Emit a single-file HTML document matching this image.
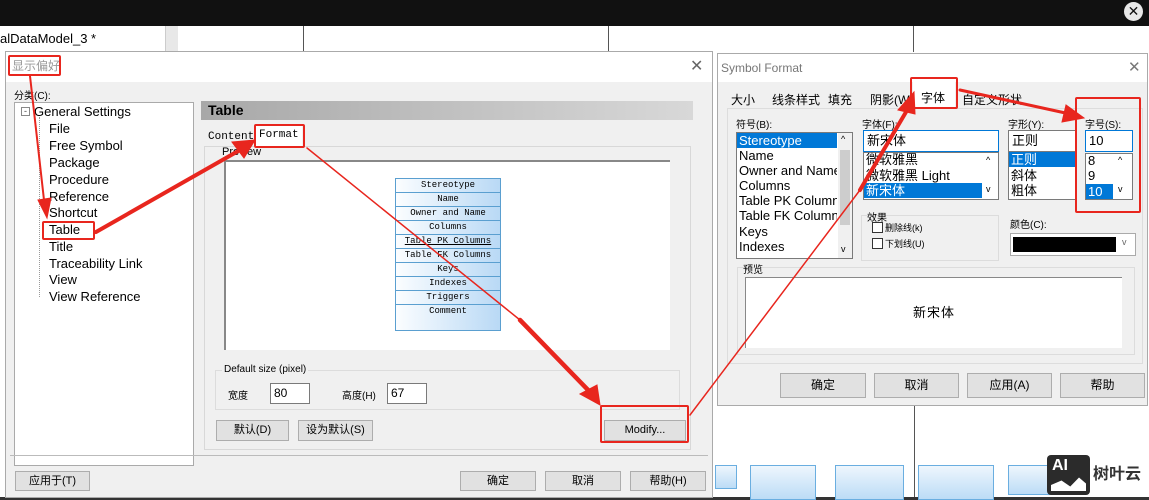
<!DOCTYPE html>
<html><head><meta charset="utf-8"><style>
*{margin:0;padding:0;box-sizing:border-box}
body{width:1149px;height:500px;overflow:hidden;background:#fff;position:relative;font-family:"Liberation Sans","Noto Sans CJK SC",sans-serif;font-size:12px;color:#000}
.a{position:absolute}
.t{position:absolute;white-space:nowrap}
.btn{position:absolute;background:#e1e1e1;border:1px solid #adadad;text-align:center;font-size:11px;line-height:19px}
.box{position:absolute;background:#fff;border:1px solid #7a7a7a}
.grp{position:absolute;border:1px solid #dcdcdc}
.red{position:absolute;border:2px solid #e8261e;border-radius:2px}
.tr{position:absolute;left:49px;font-size:13px;white-space:nowrap}
.mono{font-family:"Liberation Mono","Noto Sans CJK SC",monospace}
.row{height:14px;border-bottom:1px solid #5a9fd0;font-size:9px;text-align:center;line-height:13px;white-space:nowrap}
.li{position:absolute;font-size:13px;line-height:15px;white-space:nowrap;overflow:hidden}
.sel{background:#0078d7;color:#fff}
.mt{position:absolute;border:1px solid #6aaee0;background:linear-gradient(#eef6fd,#bcdcf6)}
</style></head><body>
<div class="a" style="left:0;top:0;width:1149px;height:26px;background:#111"></div>
<div class="a" style="left:1124px;top:2px;width:19px;height:19px;border-radius:50%;background:#e8e8e8;color:#111;font-size:14px;text-align:center;line-height:19px">✕</div>
<div class="t" style="left:0;top:31px;font-size:13px">alDataModel_3 *</div>
<div class="a" style="left:165px;top:26px;width:13px;height:26px;background:#e8e8e8;border-left:1px solid #ccc"></div>
<div class="a" style="left:303px;top:26px;width:1px;height:26px;background:#555"></div>
<div class="a" style="left:608px;top:26px;width:1px;height:26px;background:#555"></div>
<div class="a" style="left:913px;top:26px;width:1px;height:26px;background:#555"></div>
<div class="a" style="left:914px;top:405px;width:1px;height:95px;background:#555"></div>
<div class="a" style="left:0;top:497px;width:1149px;height:3px;background:#333"></div>

<!-- left dialog -->
<div class="a" style="left:5px;top:51px;width:708px;height:447px;background:#f0f0f0;border:1px solid #aaa"></div>
<div class="a" style="left:6px;top:52px;width:706px;height:30px;background:#fff"></div>
<div class="t" style="left:12px;top:57px;font-size:12px;color:#999">显示偏好</div>
<div class="red" style="left:8px;top:55px;width:53px;height:21px"></div>
<div class="t" style="left:690px;top:56px;font-size:16px;color:#666">✕</div>
<div class="t" style="left:14px;top:87px;font-size:10px">分类(C):</div>
<div class="box" style="left:14px;top:102px;width:180px;height:364px;border-color:#aaa"></div>
<div class="a" style="left:21px;top:107px;width:9px;height:9px;border:1px solid #888;font-size:9px;line-height:6px;text-align:center;color:#444">-</div>
<div class="t" style="left:34px;top:104px;font-size:13px">General Settings</div>
<div class="a" style="left:39px;top:117px;width:1px;height:180px;border-left:1px dotted #999"></div>
<div class="tr" style="top:121px">File</div>
<div class="tr" style="top:138px">Free Symbol</div>
<div class="tr" style="top:155px">Package</div>
<div class="tr" style="top:172px">Procedure</div>
<div class="tr" style="top:189px">Reference</div>
<div class="tr" style="top:205px">Shortcut</div>
<div class="tr" style="top:222px">Table</div>
<div class="red" style="left:42px;top:221px;width:53px;height:19px"></div>
<div class="tr" style="top:239px">Title</div>
<div class="tr" style="top:256px">Traceability Link</div>
<div class="tr" style="top:272px">View</div>
<div class="tr" style="top:289px">View Reference</div>

<div class="a" style="left:201px;top:101px;width:492px;height:19px;background:linear-gradient(90deg,#a8a8a8,#d8d8d8)"></div>
<div class="t" style="left:208px;top:102px;font-size:14px;font-weight:bold">Table</div>
<div class="a" style="left:204px;top:146px;width:487px;height:304px;border:1px solid #d8d8d8;background:#f0f0f0"></div>
<div class="t mono" style="left:208px;top:131px;font-size:11px">Content</div>
<div class="a" style="left:254px;top:126px;width:48px;height:21px;background:#fff"></div>
<div class="t mono" style="left:259px;top:129px;font-size:11px">Format</div>
<div class="red" style="left:254px;top:124px;width:51px;height:24px"></div>
<div class="t" style="left:222px;top:146px;font-size:11px">Preview</div>
<div class="a" style="left:224px;top:160px;width:446px;height:190px;background:#fff;border-left:2px solid #888;border-top:2px solid #888"></div>
<div class="a mono" style="left:395px;top:178px;width:106px;height:153px;border:1px solid #5a9fd0;background:linear-gradient(90deg,#fbfdff,#b9d9f5)">
<div class="row">Stereotype</div><div class="row">Name</div><div class="row">Owner and Name</div><div class="row">Columns</div><div class="row" style="text-decoration:underline">Table PK Columns</div><div class="row">Table FK Columns</div><div class="row">Keys</div><div class="row">Indexes</div><div class="row">Triggers</div><div class="row" style="border:none">Comment</div></div>
<div class="grp" style="left:215px;top:370px;width:465px;height:40px"></div>
<div class="t" style="left:222px;top:364px;font-size:10px;background:#f0f0f0;padding:0 2px">Default size (pixel)</div>
<div class="t" style="left:228px;top:387px;font-size:10px">宽度</div>
<div class="box" style="left:270px;top:383px;width:40px;height:21px;padding-left:3px;font-size:12px;line-height:19px">80</div>
<div class="t" style="left:342px;top:387px;font-size:10px">高度(H)</div>
<div class="box" style="left:387px;top:383px;width:40px;height:21px;padding-left:3px;font-size:12px;line-height:19px">67</div>
<div class="btn" style="left:216px;top:420px;width:73px;height:21px">默认(D)</div>
<div class="btn" style="left:298px;top:420px;width:75px;height:21px">设为默认(S)</div>
<div class="btn" style="left:604px;top:420px;width:82px;height:21px">Modify...</div>
<div class="red" style="left:600px;top:405px;width:89px;height:38px"></div>
<div class="a" style="left:10px;top:455px;width:698px;height:1px;background:#bbb"></div>
<div class="btn" style="left:15px;top:471px;width:75px;height:20px">应用于(T)</div>
<div class="btn" style="left:460px;top:471px;width:76px;height:20px">确定</div>
<div class="btn" style="left:545px;top:471px;width:76px;height:20px">取消</div>
<div class="btn" style="left:630px;top:471px;width:76px;height:20px">帮助(H)</div>

<!-- right dialog -->
<div class="a" style="left:717px;top:53px;width:431px;height:353px;background:#f0f0f0;border:1px solid #aaa"></div>
<div class="a" style="left:718px;top:54px;width:429px;height:28px;background:#fff"></div>
<div class="t" style="left:721px;top:61px;font-size:12px;color:#777">Symbol Format</div>
<div class="t" style="left:1128px;top:58px;font-size:15px;color:#777">✕</div>
<div class="a" style="left:727px;top:108px;width:416px;height:256px;background:#f0f0f0;border:1px solid #ddd"></div>
<div class="t" style="left:731px;top:91px;font-size:12px">大小</div>
<div class="t" style="left:772px;top:91px;font-size:12px">线条样式</div>
<div class="t" style="left:828px;top:91px;font-size:12px">填充</div>
<div class="t" style="left:870px;top:91px;font-size:12px">阴影(W)</div>
<div class="a" style="left:913px;top:80px;width:42px;height:29px;background:#fff"></div>
<div class="t" style="left:921px;top:89px;font-size:12px">字体</div>
<div class="red" style="left:910px;top:77px;width:48px;height:32px"></div>
<div class="t" style="left:962px;top:91px;font-size:12px">自定义形状</div>
<div class="t" style="left:736px;top:116px;font-size:10px">符号(B):</div>
<div class="box" style="left:736px;top:132px;width:117px;height:127px"></div>
<div class="a" style="left:838px;top:133px;width:14px;height:125px;background:#f0f0f0"></div>
<div class="a" style="left:840px;top:150px;width:10px;height:75px;background:#cdcdcd"></div>
<div class="t" style="left:841px;top:134px;font-size:9px">^</div><div class="t" style="left:841px;top:244px;font-size:9px">v</div>
<div class="li sel" style="left:737px;top:133px;width:100px;padding-left:2px">Stereotype</div>
<div class="li" style="left:739px;top:148px;width:98px">Name</div>
<div class="li" style="left:739px;top:163px;width:98px">Owner and Name</div>
<div class="li" style="left:739px;top:178px;width:98px">Columns</div>
<div class="li" style="left:739px;top:193px;width:98px">Table PK Columns</div>
<div class="li" style="left:739px;top:208px;width:98px">Table FK Columns</div>
<div class="li" style="left:739px;top:224px;width:98px">Keys</div>
<div class="li" style="left:739px;top:239px;width:98px">Indexes</div>
<div class="t" style="left:862px;top:116px;font-size:10px">字体(F):</div>
<div class="box" style="left:863px;top:130px;width:136px;height:22px;border-color:#0078d7;padding-left:3px;font-size:13px;line-height:20px">新宋体</div>
<div class="box" style="left:863px;top:152px;width:136px;height:48px"></div>
<div class="li" style="left:866px;top:152px">微软雅黑</div>
<div class="li" style="left:866px;top:168px">微软雅黑 Light</div>
<div class="li sel" style="left:864px;top:183px;width:118px;padding-left:2px">新宋体</div>
<div class="t" style="left:986px;top:155px;font-size:9px">^</div><div class="t" style="left:986px;top:184px;font-size:9px">v</div>
<div class="t" style="left:1008px;top:116px;font-size:10px">字形(Y):</div>
<div class="box" style="left:1008px;top:130px;width:68px;height:22px;padding-left:3px;font-size:13px;line-height:20px">正则</div>
<div class="box" style="left:1008px;top:152px;width:69px;height:48px"></div>
<div class="li sel" style="left:1009px;top:152px;width:66px;padding-left:2px">正则</div>
<div class="li" style="left:1011px;top:168px">斜体</div>
<div class="li" style="left:1011px;top:183px">粗体</div>
<div class="t" style="left:1085px;top:116px;font-size:10px">字号(S):</div>
<div class="box" style="left:1085px;top:130px;width:48px;height:22px;border-color:#0078d7;padding-left:3px;font-size:13px;line-height:20px">10</div>
<div class="box" style="left:1085px;top:153px;width:48px;height:47px"></div>
<div class="li" style="left:1088px;top:153px">8</div>
<div class="li" style="left:1088px;top:168px">9</div>
<div class="li sel" style="left:1086px;top:184px;width:27px;padding-left:2px">10</div>
<div class="t" style="left:1118px;top:155px;font-size:9px">^</div><div class="t" style="left:1118px;top:184px;font-size:9px">v</div>
<div class="red" style="left:1075px;top:97px;width:66px;height:116px"></div>
<div class="grp" style="left:861px;top:215px;width:138px;height:46px"></div>
<div class="t" style="left:867px;top:209px;font-size:10px">效果</div>
<div class="a" style="left:872px;top:222px;width:11px;height:11px;border:1px solid #333;background:#fff"></div>
<div class="t" style="left:885px;top:221px;font-size:9px">删除线(k)</div>
<div class="a" style="left:872px;top:238px;width:11px;height:11px;border:1px solid #333;background:#fff"></div>
<div class="t" style="left:885px;top:237px;font-size:9px">下划线(U)</div>
<div class="t" style="left:1010px;top:216px;font-size:10px">颜色(C):</div>
<div class="box" style="left:1010px;top:233px;width:126px;height:23px;border-color:#aaa"></div>
<div class="a" style="left:1013px;top:237px;width:103px;height:15px;background:#000"></div>
<div class="t" style="left:1122px;top:237px;font-size:9px;color:#666">v</div>
<div class="grp" style="left:737px;top:267px;width:398px;height:88px"></div>
<div class="t" style="left:743px;top:261px;font-size:10px">预览</div>
<div class="a" style="left:745px;top:277px;width:377px;height:71px;background:#fff;border-left:1px solid #888;border-top:1px solid #888"></div>
<div class="t" style="left:913px;top:302px;font-size:13px;letter-spacing:1px">新宋体</div>
<div class="btn" style="left:780px;top:373px;width:86px;height:25px;line-height:23px;font-size:12px">确定</div>
<div class="btn" style="left:874px;top:373px;width:85px;height:25px;line-height:23px;font-size:12px">取消</div>
<div class="btn" style="left:967px;top:373px;width:85px;height:25px;line-height:23px;font-size:12px">应用(A)</div>
<div class="btn" style="left:1060px;top:373px;width:85px;height:25px;line-height:23px;font-size:12px">帮助</div>

<!-- mini tables -->
<div class="mt" style="left:715px;top:465px;width:22px;height:24px"></div>
<div class="mt" style="left:750px;top:465px;width:66px;height:35px"></div>
<div class="mt" style="left:835px;top:465px;width:69px;height:35px"></div>
<div class="mt" style="left:918px;top:465px;width:76px;height:35px"></div>
<div class="mt" style="left:1008px;top:465px;width:57px;height:30px"></div>
<div class="a" style="left:1047px;top:455px;width:43px;height:40px;background:#2b2b2b;border-radius:4px"></div>
<div class="t" style="left:1052px;top:457px;font-size:16px;font-weight:bold;color:#fff">AI</div>
<div class="a" style="left:1051px;top:476px;width:35px;height:15px;background:#fff;clip-path:polygon(0 60%,30% 30%,55% 70%,80% 10%,100% 50%,100% 100%,0 100%)"></div>
<div class="t" style="left:1093px;top:460px;font-size:16px;font-weight:bold;color:#333">树叶云</div>

<svg class="a" style="left:0;top:0" width="1149" height="500">
<g stroke="#e8261e" fill="#e8261e" stroke-linecap="round">
<line x1="30" y1="76" x2="44" y2="200" stroke-width="2"/>
<polygon points="38,200 51,198 47,218"/>
<line x1="96" y1="232" x2="240" y2="150" stroke-width="4"/>
<polygon points="232,142 255,140 244,158"/>
<line x1="307" y1="148" x2="520" y2="320" stroke-width="1.5"/>
<line x1="520" y1="320" x2="590" y2="392" stroke-width="4.5"/>
<polygon points="580,394 597,385 600,405"/>
<line x1="690" y1="415" x2="860" y2="190" stroke-width="1.5"/>
<line x1="860" y1="190" x2="906" y2="112" stroke-width="4"/>
<polygon points="898,110 915,114 914,92"/>
<line x1="960" y1="90" x2="1070" y2="114" stroke-width="3"/>
<polygon points="1066,105 1062,122 1084,118"/>
</g></svg>
</body></html>
